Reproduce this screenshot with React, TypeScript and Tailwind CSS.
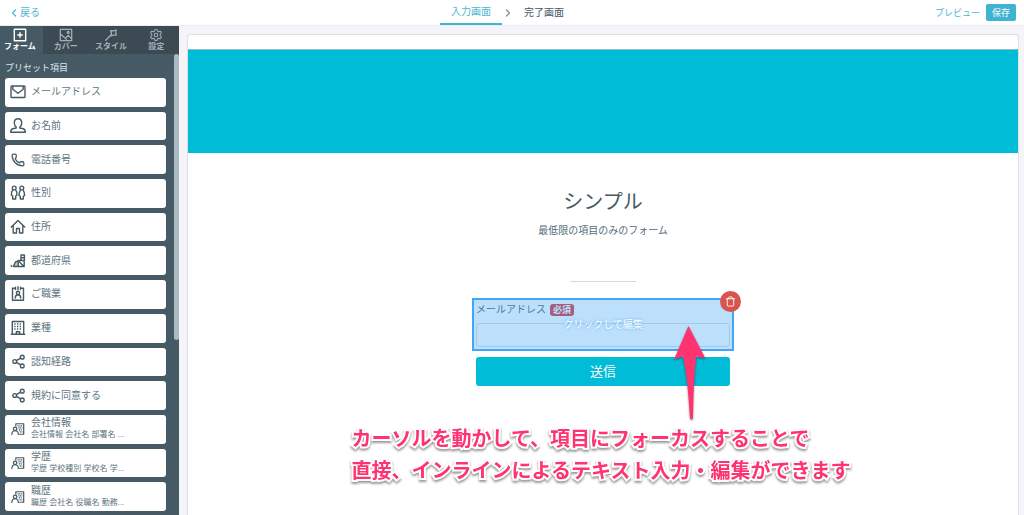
import type { ReactNode } from "react";
import { ChevronLeft, ChevronRight, Phone, Settings, Share2, Trash } from "lucide-react";

function Svg({ children, className = "size-4" }: { children: ReactNode; className?: string }) {
  return (
    <svg
      viewBox="0 0 16 16"
      fill="none"
      stroke="currentColor"
      strokeWidth="1.4"
      strokeLinejoin="round"
      strokeLinecap="round"
      className={className}
      aria-hidden="true"
    >
      {children}
    </svg>
  );
}

const mailIcon = (
  <Svg>
    <rect x="1" y="2" width="14" height="11.500" rx="0.8" />
    <path d="M2.800 2.500v2.700L8 9.300l5.200-4.100V2.500" />
  </Svg>
);

const personIcon = (
  <Svg>
    <path d="M8 .8c-2.300 0-3.700 1.700-3.700 4.100 0 1.900.8 3.300 1.900 4.100v1L2.700 10.800C1.200 11.200.7 12.300.7 14.300h14.600c0-2-.5-3.100-2-3.500L9.800 10V9c1.100-.8 1.900-2.200 1.900-4.100C11.700 2.500 10.300.8 8 .8z" />
  </Svg>
);

const phoneIcon = <Phone className="size-3.5" strokeWidth={2.2} aria-hidden="true" />;

const genderIcon = (
  <Svg>
    <circle cx="4.200" cy="3" r="1.900" />
    <path d="M2.800 5.200C1.700 5.800 1.500 7 1.500 8.500v1.700l1.200.8v3h3v-3l1.200-.8V8.500c0-1.500-.2-2.700-1.300-3.300" />
    <circle cx="11.800" cy="3" r="1.900" />
    <path d="M10.400 5.200C9.500 6.300 9 8.500 9 10.500l1.300.8V14h3v-2.700l1.300-.8c0-2-.5-4.200-1.400-5.300" />
  </Svg>
);

const houseIcon = (
  <Svg>
    <path d="M1.300 8L8 1.500 14.700 8M3.200 6.400v7.600h3.300V9.500h3V14h3.300V6.400" />
  </Svg>
);

const prefectureIcon = (
  <Svg>
    <circle cx="1.500" cy="13" r="1" fill="currentColor" stroke="none" />
    <path d="M3.500 13.500h4.700V8L5.500 8.800 4.500 11z" fill="currentColor" fillOpacity=".35" />
    <path d="M8.200 13.500h6V7.500H8.200M11 7.500V2h3.400v5.500M11 4.800h3.400M9.500 9l3.700 3.700" />
  </Svg>
);

const jobIcon = (
  <Svg>
    <path d="M4.500 2.300h-2v12h11v-12h-2M5.500 1.200v2.300M8 .8v2.700M10.500 1.200v2.300" />
    <circle cx="8" cy="6.900" r="1.600" />
    <path d="M5.300 12c0-2.100.9-3.300 2.700-3.300s2.700 1.200 2.700 3.300" />
  </Svg>
);

const buildingIcon = (
  <Svg>
    <path d="M2.300 1.500h11.400v12.700h-4v-2.500H6.300v2.500h-4zM1.300 14.200h13.400" />
    <path d="M4.300 4h7.700M4.300 6.500h7.700M4.300 9h7.700" strokeDasharray="1.300 1.400" strokeLinecap="butt" />
  </Svg>
);

const shareIcon = <Share2 className="size-[15px]" strokeWidth={2.2} aria-hidden="true" />;

const companyIcon = (
  <Svg className="size-3.5">
    <path d="M5.500 4.500V2h9v12h-4.500" />
    <path d="M7.500 4.500h5.500M8.500 6.800h4.500M9 9.100h4M10 11.400h3" strokeDasharray="1.300 .7" strokeLinecap="butt" />
    <circle cx="4.700" cy="7.800" r="2" />
    <path d="M1 14.200c0-2.900 1.200-4.200 3.700-4.200s3.700 1.300 3.700 4.200" />
  </Svg>
);

const presets = [
  { label: "メールアドレス", icon: mailIcon },
  { label: "お名前", icon: personIcon },
  { label: "電話番号", icon: phoneIcon },
  { label: "性別", icon: genderIcon },
  { label: "住所", icon: houseIcon },
  { label: "都道府県", icon: prefectureIcon },
  { label: "ご職業", icon: jobIcon },
  { label: "業種", icon: buildingIcon },
  { label: "認知経路", icon: shareIcon },
  { label: "規約に同意する", icon: shareIcon },
  { label: "会社情報", icon: companyIcon, detail: "会社情報 会社名 部署名 ..." },
  { label: "学歴", icon: companyIcon, detail: "学歴 学校種別 学校名 学..." },
  { label: "職歴", icon: companyIcon, detail: "職歴 会社名 役職名 勤務..." },
];

const tabs = [
  {
    label: "フォーム",
    icon: (
      <Svg className="size-3.5">
        <path d="M1.500 1.500h13v13h-13zM8 5.500v5M5.500 8h5" strokeWidth="1.600" />
      </Svg>
    ),
  },
  {
    label: "カバー",
    icon: (
      <Svg className="size-3.5">
        <path d="M1.500 1.500h13v13h-13zM1.500 6.500l7 6.500M7.500 11.500l3-3 4 4" />
        <circle cx="10.500" cy="5" r="1.200" />
      </Svg>
    ),
  },
  {
    label: "スタイル",
    icon: (
      <Svg className="size-3.5">
        <path d="M2 14l6-6M7.500 3l3 .3L14 2.300l-.6 3.500.6 2.500-3.200-.3L8.300 9l.2-3z" />
      </Svg>
    ),
  },
  { label: "設定", icon: <Settings className="size-3.5" strokeWidth={1.8} aria-hidden="true" /> },
];

function Header() {
  return (
    <header className="grid h-[26px] shrink-0 grid-cols-3 items-center border-b border-[#e9ecf0] bg-white text-[10px] leading-4">
      <a href="#back" className="flex items-center pl-2 text-[#4db6d0]">
        <ChevronLeft className="size-3" strokeWidth={2.5} aria-hidden="true" />
        戻る
      </a>

      <nav className="flex h-full items-center justify-center">
        <a
          href="#input"
          aria-current="page"
          className="flex h-full w-[62px] items-center justify-center border-b-2 border-[#3fb5d0] text-[#4db6d0]"
        >
          入力画面
        </a>
        <ChevronRight className="size-3 text-[#78909c]" strokeWidth={2.5} aria-hidden="true" />
        <a href="#complete" className="flex h-full items-center pr-5 pl-2.5 text-[#455a64]">
          完了画面
        </a>
      </nav>

      <div className="flex items-center justify-end gap-1.5 pr-2 text-[9px]">
        <a href="#preview" className="text-[#4db6d0]">
          プレビュー
        </a>
        <button className="h-[17px] rounded-xs bg-[#3fb3cf] px-1.5 text-white">保存</button>
      </div>
    </header>
  );
}

function Sidebar() {
  return (
    <aside className="flex w-[179px] shrink-0 flex-col bg-[#455a64]">
      {/* Tabs */}
      <div role="tablist" className="flex h-7 shrink-0 bg-[#3b4a53]">
        {tabs.map((tab, i) => (
          <button
            key={tab.label}
            role="tab"
            aria-selected={i === 0}
            className={
              i === 0
                ? "flex w-[43px] flex-col items-center bg-[#455a64] pt-0.5 pr-[3px] text-[8px] leading-[10px] font-bold text-white"
                : "flex flex-1 flex-col items-center pt-0.5 text-[8px] leading-[10px] font-bold text-[#a5b1b8]"
            }
          >
            {tab.icon}
            {tab.label}
          </button>
        ))}
      </div>

      <div className="flex min-h-0 flex-1">
        {/* Preset fields */}
        <div className="flex flex-1 flex-col pt-2 pr-2 pb-1 pl-[5px]">
          <h2 className="mb-1 text-[9px] leading-3 text-[#dfe5e8]">プリセット項目</h2>
          <ul className="grid flex-1 auto-rows-fr gap-[5px]">
            {presets.map((item) => (
              <li key={item.label}>
                <button className="flex h-full w-full items-center gap-[5px] rounded-[3px] bg-white px-[5px] text-left text-[#607580]">
                  <span className="flex w-4 justify-center text-[#455a64]">{item.icon}</span>
                  <span className="flex flex-col">
                    <span className="text-[10px] leading-3">{item.label}</span>
                    {item.detail && <span className="text-[8px] leading-3">{item.detail}</span>}
                  </span>
                </button>
              </li>
            ))}
          </ul>
        </div>

        {/* Scrollbar */}
        <div className="w-[5px] shrink-0">
          <div className="h-[62%] rounded-full bg-[#a9bac3]" />
        </div>
      </div>
    </aside>
  );
}

function FormPreview() {
  return (
    <div className="relative w-[262px]">
      {/* Field being edited */}
      <div className="relative h-[53px] px-1 pt-1.5">
        <label htmlFor="email" className="flex items-center gap-1 text-[10px] leading-3 text-[#546e7a]">
          メールアドレス
          <span className="rounded-[3px] bg-[#da494d] px-[3px] text-[9px] leading-3 font-bold text-white">必須</span>
        </label>
        <input
          id="email"
          type="email"
          className="mt-[7px] block h-6 w-full rounded-[3px] border border-[#d8e1e5] bg-white px-2 text-[10px]"
        />
        <button className="absolute inset-0 border-2 border-[#42a5f5] bg-[#2196f3]/30 text-[10px] leading-3 text-white [text-shadow:0_0_3px_#42a5f5]">
          クリックして編集
        </button>
        <button
          aria-label="削除"
          className="absolute -top-[7px] -right-[7px] flex size-[21px] items-center justify-center rounded-full bg-[#d9534f] text-white"
        >
          <Trash className="size-[11px]" strokeWidth={2} aria-hidden="true" />
        </button>
      </div>

      <div className="px-1 pt-1.5">
        <button className="h-[29px] w-full rounded-[3px] bg-[#00bcd7] text-[13px] text-white">送信</button>
      </div>

      {/* Arrow pointing at the field */}
      <svg
        viewBox="0 0 34 98"
        className="absolute top-7 right-[27px] w-[34px] drop-shadow-[0_1px_1px_rgba(0,0,0,0.4)]"
        fill="#ff3370"
        aria-hidden="true"
      >
        <path d="M15.500 0L32.500 32.500L23.300 30.300C21 48 20.500 70 20 92Q18.500 95.500 17 92C15.500 70 14 48 9.800 30.300L1 33.500Z" />
      </svg>
    </div>
  );
}

export default function App() {
  return (
    <div className="flex h-screen flex-col overflow-hidden bg-[#f4f4f9] font-['Liberation_Sans','Noto_Sans_CJK_JP',sans-serif]">
      <Header />
      <div className="flex min-h-0 flex-1">
        <Sidebar />
        <main className="flex min-w-0 flex-1 pt-2 pr-[5px] pl-2">
          <div className="flex flex-1 flex-col items-center rounded-t border border-b-0 border-[#d8e1e6] bg-white">
            <div className="mt-3.5 h-[104px] w-full shrink-0 border-t border-[#8fb9c4] bg-[#00bcd7]" />

            <h1 className="mt-[34px] text-[20px] leading-[30px] text-[#455a64]">シンプル</h1>
            <p className="mt-1.5 text-[10px] leading-4 text-[#546e7a]">最低限の項目のみのフォーム</p>
            <hr className="mt-[42px] mb-4 w-[66px] border-[#cfdbe0]" />

            <FormPreview />

            <p className="mt-[37px] pr-1 text-[20px] leading-8 font-bold whitespace-nowrap text-[#ff3370] [-webkit-text-stroke:4px_#fff] [paint-order:stroke_fill] drop-shadow-[0_2px_1px_rgba(0,0,0,0.4)]">
              カーソルを動かして、項目にフォーカスすることで
              <br />
              直接、インラインによるテキスト入力・編集ができます
            </p>
          </div>
        </main>
      </div>
    </div>
  );
}
